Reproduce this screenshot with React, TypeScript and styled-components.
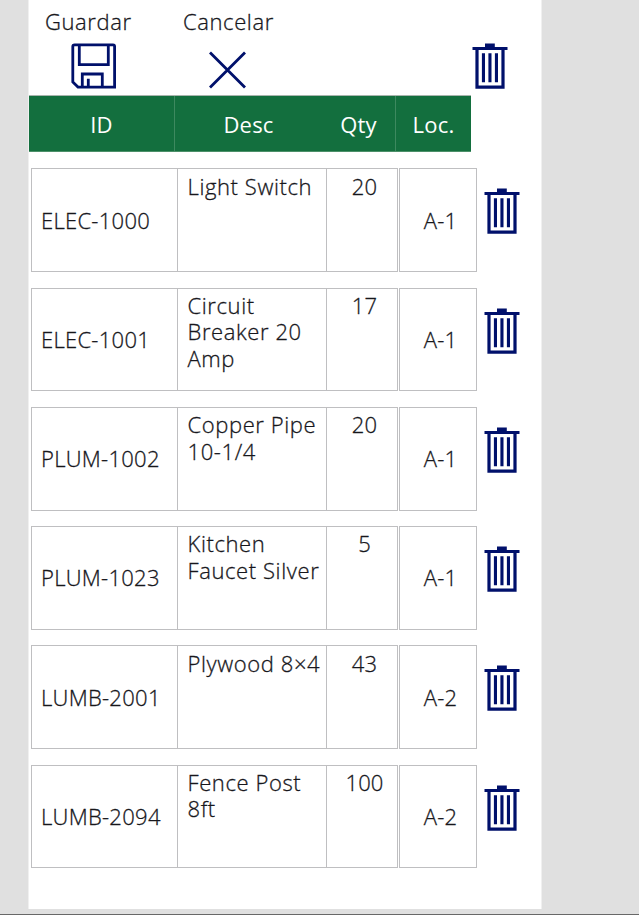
import React from "react";
import styled, { createGlobalStyle } from "styled-components";

const NAVY = "#00106b";

const GlobalStyle = createGlobalStyle`
  *, *::before, *::after { box-sizing: border-box; }
  body {
    margin: 0;
    background: #e0e0e0;
    color: #17171c;
    font-family: "Open Sans", "Noto Sans", sans-serif;
    font-weight: 300;
    font-size: 22px;
    -webkit-text-stroke: 0.3px currentColor;
    overflow: hidden;
  }
`;

const Screen = styled.div`
  height: 915px;
  padding-left: 28px;
  border-bottom: 1px solid #686868;
`;

const Panel = styled.main`
  width: 514px;
  height: 909px;
  background: #fff;
  border: solid #f0f0f0;
  border-width: 0 1px;
`;

const Toolbar = styled.header`
  display: flex;
  height: 95px;
`;

const Action = styled.button<{ $width: number; $indent: number; $gap: number }>`
  display: flex;
  flex-direction: column;
  align-items: flex-start;
  width: ${(p) => p.$width}px;
  padding: 6px 0 0 ${(p) => p.$indent}px;
  border: 0;
  background: none;
  color: inherit;
  font: inherit;
  line-height: 30px;

  svg {
    margin: ${(p) => p.$gap}px 0 0 26px;
  }
`;

const ActionLabel = styled.span<{ $spacing: number }>`
  font-size: 22px;
  letter-spacing: ${(p) => p.$spacing}px;
  white-space: nowrap;
`;

const IconButton = styled.button<{ $top: number; $left: number }>`
  display: block;
  flex: none;
  height: 46px;
  margin: ${(p) => p.$top}px 0 0 ${(p) => p.$left}px;
  padding: 0;
  border: 0;
  background: none;

  svg {
    display: block;
  }
`;

const TableHead = styled.div`
  display: grid;
  grid-template-columns: 146px 147px 74px 75px;
  width: 442px;
  height: 57px;
  background: #136f3e;
  border-top: 1px solid #a9b5ae;
  border-bottom: 1px solid #4c9069;
`;

const HeadCell = styled.div<{ $divider?: boolean }>`
  display: flex;
  align-items: center;
  justify-content: center;
  border-right: ${(p) => (p.$divider ? "1px solid #3d895f" : "0")};
  color: #fff;
  font-weight: 400;
  font-size: 22px;
  letter-spacing: 0.2px;
  -webkit-text-stroke: 0;
`;

const Rows = styled.div`
  padding: 16.4px 0 0 2px;
`;

const Row = styled.div`
  display: flex;
  height: 119.25px;
`;

const Cell = styled.div<{ $width: number }>`
  flex: none;
  width: ${(p) => p.$width}px;
  height: 103.7px;
  border: 1px solid #bfbfc1;
  line-height: 26.3px;
`;

const IdCell = styled(Cell)`
  display: flex;
  align-items: center;
  padding: 0 0 0.9px 9px;
  letter-spacing: 0.28px;
`;

const DescCell = styled(Cell)`
  margin-left: -1px;
  padding: 3.34px 0 0 9.5px;
  letter-spacing: 0.6px;
  white-space: pre;
`;

const QtyCell = styled(Cell)`
  margin-left: -1px;
  padding: 3.34px 0 0 5px;
  text-align: center;
  letter-spacing: 0.1px;
`;

const LocCell = styled(Cell)`
  display: flex;
  align-items: center;
  justify-content: center;
  margin-left: 1px;
  padding: 0 0 0.9px 5px;
  letter-spacing: 0.2px;
`;

function TrashIcon() {
  return (
    <svg width="36" height="46" viewBox="0 0 36 46" fill={NAVY} aria-hidden="true">
      <path d="M13 0.6h9.8v3.3h12.7v3.2H0.5V3.9H13z" />
      <path
        fillRule="evenodd"
        d="M3.4 7h29.2v38.7H3.4zM6.6 7.1v35.5h22.8V7.1z"
      />
      <path d="M9.9 10.2h3.1v29H9.9zM16.4 10.2h3.1v29h-3.1zM22.9 10.2h3.1v29h-3.1z" />
    </svg>
  );
}

function SaveIcon() {
  return (
    <svg width="46" height="46" viewBox="0 0 46 46" fill="none" stroke={NAVY} strokeWidth="2.8" aria-hidden="true">
      <path d="M3.6 1.9H42q1.6 0 1.6 1.6v40.6H7L1.8 39V3.5q0-1.6 1.8-1.6z" />
      <path d="M8.3 1.9v19.7h29V1.9M11.3 44V31h20v13M17.3 35.8v8" />
    </svg>
  );
}

function CloseIcon() {
  return (
    <svg width="38" height="38" viewBox="0 0 38 38" fill="none" stroke={NAVY} strokeWidth="2.8" aria-hidden="true">
      <path d="M1 1.4l35 35.2M36 1.4L1 36.6" />
    </svg>
  );
}

const items = [
  { id: "ELEC-1000", desc: "Light Switch", qty: 20, loc: "A-1" },
  { id: "ELEC-1001", desc: "Circuit\nBreaker 20\nAmp", qty: 17, loc: "A-1" },
  { id: "PLUM-1002", desc: "Copper Pipe\n10-1/4", qty: 20, loc: "A-1" },
  { id: "PLUM-1023", desc: "Kitchen\nFaucet Silver", qty: 5, loc: "A-1" },
  { id: "LUMB-2001", desc: "Plywood 8×4", qty: 43, loc: "A-2" },
  { id: "LUMB-2094", desc: "Fence Post\n8ft", qty: 100, loc: "A-2" },
];

export default function App() {
  return (
    <>
      <GlobalStyle />
      <Screen>
        <Panel>
          <Toolbar>
            <Action $width={138} $indent={16} $gap={7}>
              <ActionLabel $spacing={0.6}>Guardar</ActionLabel>
              <SaveIcon />
            </Action>
            <Action $width={168} $indent={16} $gap={15}>
              <ActionLabel $spacing={0.6}>Cancelar</ActionLabel>
              <CloseIcon />
            </Action>
            <IconButton $top={43} $left={137} aria-label="Eliminar">
              <TrashIcon />
            </IconButton>
          </Toolbar>
          <TableHead>
            <HeadCell $divider>ID</HeadCell>
            <HeadCell>Desc</HeadCell>
            <HeadCell $divider>Qty</HeadCell>
            <HeadCell>Loc.</HeadCell>
          </TableHead>
          <Rows>
            {items.map((item) => (
              <Row key={item.id}>
                <IdCell $width={147}>{item.id}</IdCell>
                <DescCell $width={150}>{item.desc}</DescCell>
                <QtyCell $width={72}>{item.qty}</QtyCell>
                <LocCell $width={78}>{item.loc}</LocCell>
                <IconButton $top={20} $left={7} aria-label="Eliminar">
                  <TrashIcon />
                </IconButton>
              </Row>
            ))}
          </Rows>
        </Panel>
      </Screen>
    </>
  );
}
